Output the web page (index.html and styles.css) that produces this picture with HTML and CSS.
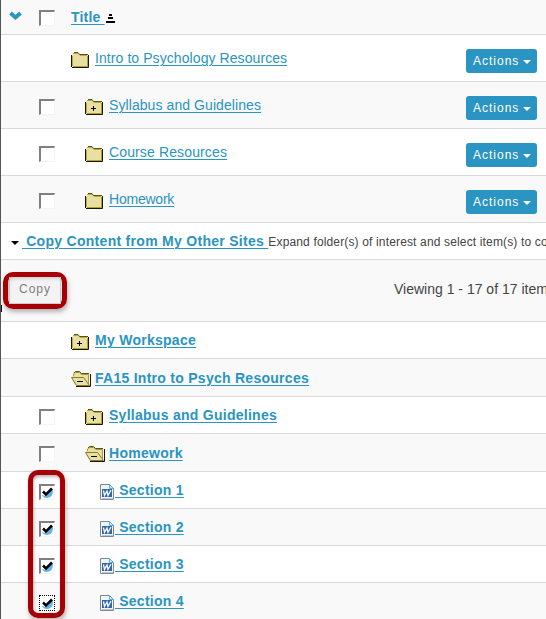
FILE: index.html
```html
<!DOCTYPE html>
<html lang="en">
<head>
<meta charset="utf-8">
<title>Resources</title>
<link rel="stylesheet" href="styles.css">
</head>
<body>
<svg class="defs" aria-hidden="true">
  <symbol id="folder" viewBox="0 0 18 16">
    <path d="M2 1.500H7L8.500 3H16.500V14.500H.500V3.500Z" fill="#e8dfa5"/>
    <path d="M2 1.500H7L9 3.500H16M1.500 4V14" fill="none" stroke="#bba93b"/>
    <path d="M3 .500H7L8.500 2.500H17" fill="none" stroke="#5b521c"/>
    <path d="M16.500 4V14M2 14.500H17" fill="none" stroke="#b0a02c"/>
    <path d="M.500 3V15M1 15.500H17.500V3" fill="none" stroke="#171505"/>
  </symbol>
  <symbol id="plus" viewBox="0 0 18 16">
    <use href="#folder"/>
    <path d="M6 9.500H11M8.500 7V12" stroke="#000"/>
  </symbol>
  <symbol id="open" viewBox="0 0 20 16">
    <path d="M2 5V3L4 1H9L11 3H18V15H5L1 9V6Z" fill="#e8dfa5"/>
    <path d="M2.500 5V3L4.500 1.500H8.500L11 3.500H17.500V13" fill="none" stroke="#a99a30"/>
    <path d="M3 2L4.500 .500H8.500L10.500 2.500H18" fill="none" stroke="#5b521c"/>
    <path d="M.500 6.500H12.500L18.500 14.500H5.500Z" fill="#e8dfa5" stroke="#8b7c24"/>
    <path d="M5 15.500H19.500V3" fill="none" stroke="#171505"/>
    <path d="M6 10.500H12" stroke="#000"/>
  </symbol>
  <symbol id="word" viewBox="0 0 14 16">
    <path d="M.500 .500H9.500L13.500 4.500V15.500H.500Z" fill="#eef5fb" stroke="#82888c"/>
    <path d="M9.500 .500V4.500H13.500Z" fill="#c9eafa" stroke="#54b1dc"/>
    <path d="M2 5H12V13H2Z" fill="#3165ac"/>
    <path d="M3.500 6.500L4.500 11.500L7 7L8 11.500L11 6" fill="none" stroke="#fff" stroke-width="1.300"/>
    <path d="M2 14.500H13" stroke="#bdc6d0"/>
  </symbol>
  <symbol id="tick" viewBox="0 0 16 16">
    <path d="M13.500 5C15 10 12 14 8 14C5 14 3.500 12 3 11L7 12Z" fill="#62b5e8"/>
    <path d="M4 7.500L7 10.500L13 4.500" fill="none" stroke="#000" stroke-width="2.500"/>
  </symbol>
</svg>
<main class="list">
  <div class="row head"><svg class="chev" viewBox="0 0 13 9"><path d="M1.500 2L6.500 6.500L11.500 2" fill="none" stroke="#2a94c3" stroke-width="3.800"/></svg><span class="box"></span><a class="title">Title&nbsp;</a><svg class="sort" viewBox="0 0 9 9"><path d="M3 1H6M2 4H7M0 8H9" stroke="#000" stroke-width="2"/></svg></div>
  <div class="row r47"><svg class="icon root"><use href="#folder"/></svg><a class="t1">Intro to Psychology Resources</a><button class="actions">Actions<i></i></button></div>
  <div class="row r47 alt"><span class="box"></span><svg class="icon"><use href="#plus"/></svg><a class="t1">Syllabus and Guidelines</a><button class="actions">Actions<i></i></button></div>
  <div class="row r47"><span class="box"></span><svg class="icon"><use href="#folder"/></svg><a class="t3">Course Resources</a><button class="actions">Actions<i></i></button></div>
  <div class="row r47 alt"><span class="box"></span><svg class="icon"><use href="#folder"/></svg><a class="t4">Homework</a><button class="actions">Actions<i></i></button></div>
  <div class="row copyhead"><i class="arrow"></i><a class="bold sites">&nbsp;Copy Content from My Other Sites&nbsp;</a><span class="hint">Expand folder(s) of interest and select item(s) to co</span></div>
  <div class="row tools alt"><span class="ring"><button class="copy">Copy</button></span><span class="viewing">Viewing 1 - 17 of 17 item</span></div>
  <div class="row"><svg class="icon root"><use href="#plus"/></svg><a class="bold">My Workspace</a></div>
  <div class="row r38 alt"><svg class="icon open root"><use href="#open"/></svg><a class="bold">FA15 Intro to Psych Resources</a></div>
  <div class="row"><span class="box"></span><svg class="icon"><use href="#plus"/></svg><a class="bold">Syllabus and Guidelines</a></div>
  <div class="row r38 alt"><span class="box"></span><svg class="icon open"><use href="#open"/></svg><a class="bold">Homework</a></div>
  <section class="sections">
    <div class="row"><span class="box"><svg><use href="#tick"/></svg></span><svg class="icon word"><use href="#word"/></svg><a class="bold">&nbsp;Section 1</a></div>
    <div class="row alt"><span class="box"><svg><use href="#tick"/></svg></span><svg class="icon word"><use href="#word"/></svg><a class="bold">&nbsp;Section 2</a></div>
    <div class="row"><span class="box"><svg><use href="#tick"/></svg></span><svg class="icon word"><use href="#word"/></svg><a class="bold">&nbsp;Section 3</a></div>
    <div class="row alt"><span class="box focus"><svg><use href="#tick"/></svg></span><svg class="icon word"><use href="#word"/></svg><a class="bold">&nbsp;Section 4</a></div>
    <div class="marker"></div>
  </section>
</main>
</body>
</html>
```
FILE: styles.css
```css
* { box-sizing: border-box; }
body { margin: 0; background: #fff; font: 14px/18px "Liberation Sans", Arial, sans-serif; color: #444; }
.defs { position: absolute; width: 0; height: 0; }
.list { width: 546px; height: 619px; overflow: hidden; border-left: 1px solid #555; }
.row { display: flex; align-items: center; height: 37px; border-bottom: 1px solid #d9d9d9; white-space: nowrap; }
.alt, .head { background: #f9f9f9; }
.head { height: 35px; }
.r47 { height: 47px; }
.r38 { height: 38px; }
a { color: #2a94c3; text-decoration: underline; text-decoration-thickness: 1px; text-underline-offset: 2px; }
.bold, .title { font-weight: 700; }
.bold { letter-spacing: .27px; }
.t1 { letter-spacing: .08px; }
.t3 { letter-spacing: .13px; }
.t4 { letter-spacing: -.22px; }
.box { flex: none; width: 16px; height: 16px; margin: 3px 30px 0 38px; background: #fff; border: solid #f4f4f4; border-width: 2px 1px 1px 2px; border-top-color: #808080; border-left-color: #808080; }
.box svg { display: block; width: 16px; height: 16px; margin: -2px 0 0 -2px; }
.focus { border: 1px dotted #000; }
.focus svg { margin: -1px 0 0 -1px; }
.icon { flex: none; width: 18px; height: 16px; margin: 3px 6px 0 0; }
.root { margin-left: 70px; }
.open { width: 20px; margin-right: 4px; }
.word { width: 14px; margin: 3px 1px 0 15px; }
.chev { width: 13px; height: 9px; margin: -4px 0 0 8px; }
.head .box { margin: 1px 17px 0 17px; }
.title { margin-left: -1px; letter-spacing: .2px; }
.sort { width: 9px; height: 9px; margin: 2px 0 0 1px; }
.actions { width: 71px; height: 24px; margin: 6px 9px 0 auto; padding: 0 0 0 7px; display: flex; align-items: center; border: 0; border-radius: 3px; background: #2a94c3; color: #fff; font: 12px "Liberation Sans", Arial, sans-serif; letter-spacing: 1px; }
.actions i, .arrow { width: 0; height: 0; border: 4px solid transparent; border-top-color: #fff; border-bottom: 0; margin: 2px 0 0 4px; }
.arrow { border-top-color: #000; margin: 3px 3px 0 10px; }
.hint { font-size: 12px; letter-spacing: .15px; margin-top: 1px; }
.sites { letter-spacing: .29px; }
.tools { height: 62px; position: relative; }
.tools::before { content: ""; position: absolute; left: -1px; top: 45px; width: 2px; height: 7px; background: #000; }
.ring { flex: none; width: 64px; height: 37px; margin: -1px 0 0 2px; border: 5px solid #a60006; border-radius: 10px; box-shadow: 1px 3px 4px #7778, inset 1px 2px 3px #7778; }
.copy { display: block; width: 52px; height: 27px; margin: 0 0 0 1px; padding: 0 0 2px; border: 1px solid #ccc; border-top: 0; background: #eee8; color: #808080; font: 12px "Liberation Sans", Arial, sans-serif; letter-spacing: 1px; }
.viewing { margin: -3px 0 0 327px; font-size: 14px; }
.sections { position: relative; }
.marker { position: absolute; left: 27px; top: -2px; width: 37px; height: 148px; border: 5px solid #a60006; border-radius: 10px; box-shadow: 1px 3px 4px #7778, inset 1px 2px 3px #7778; }
```
